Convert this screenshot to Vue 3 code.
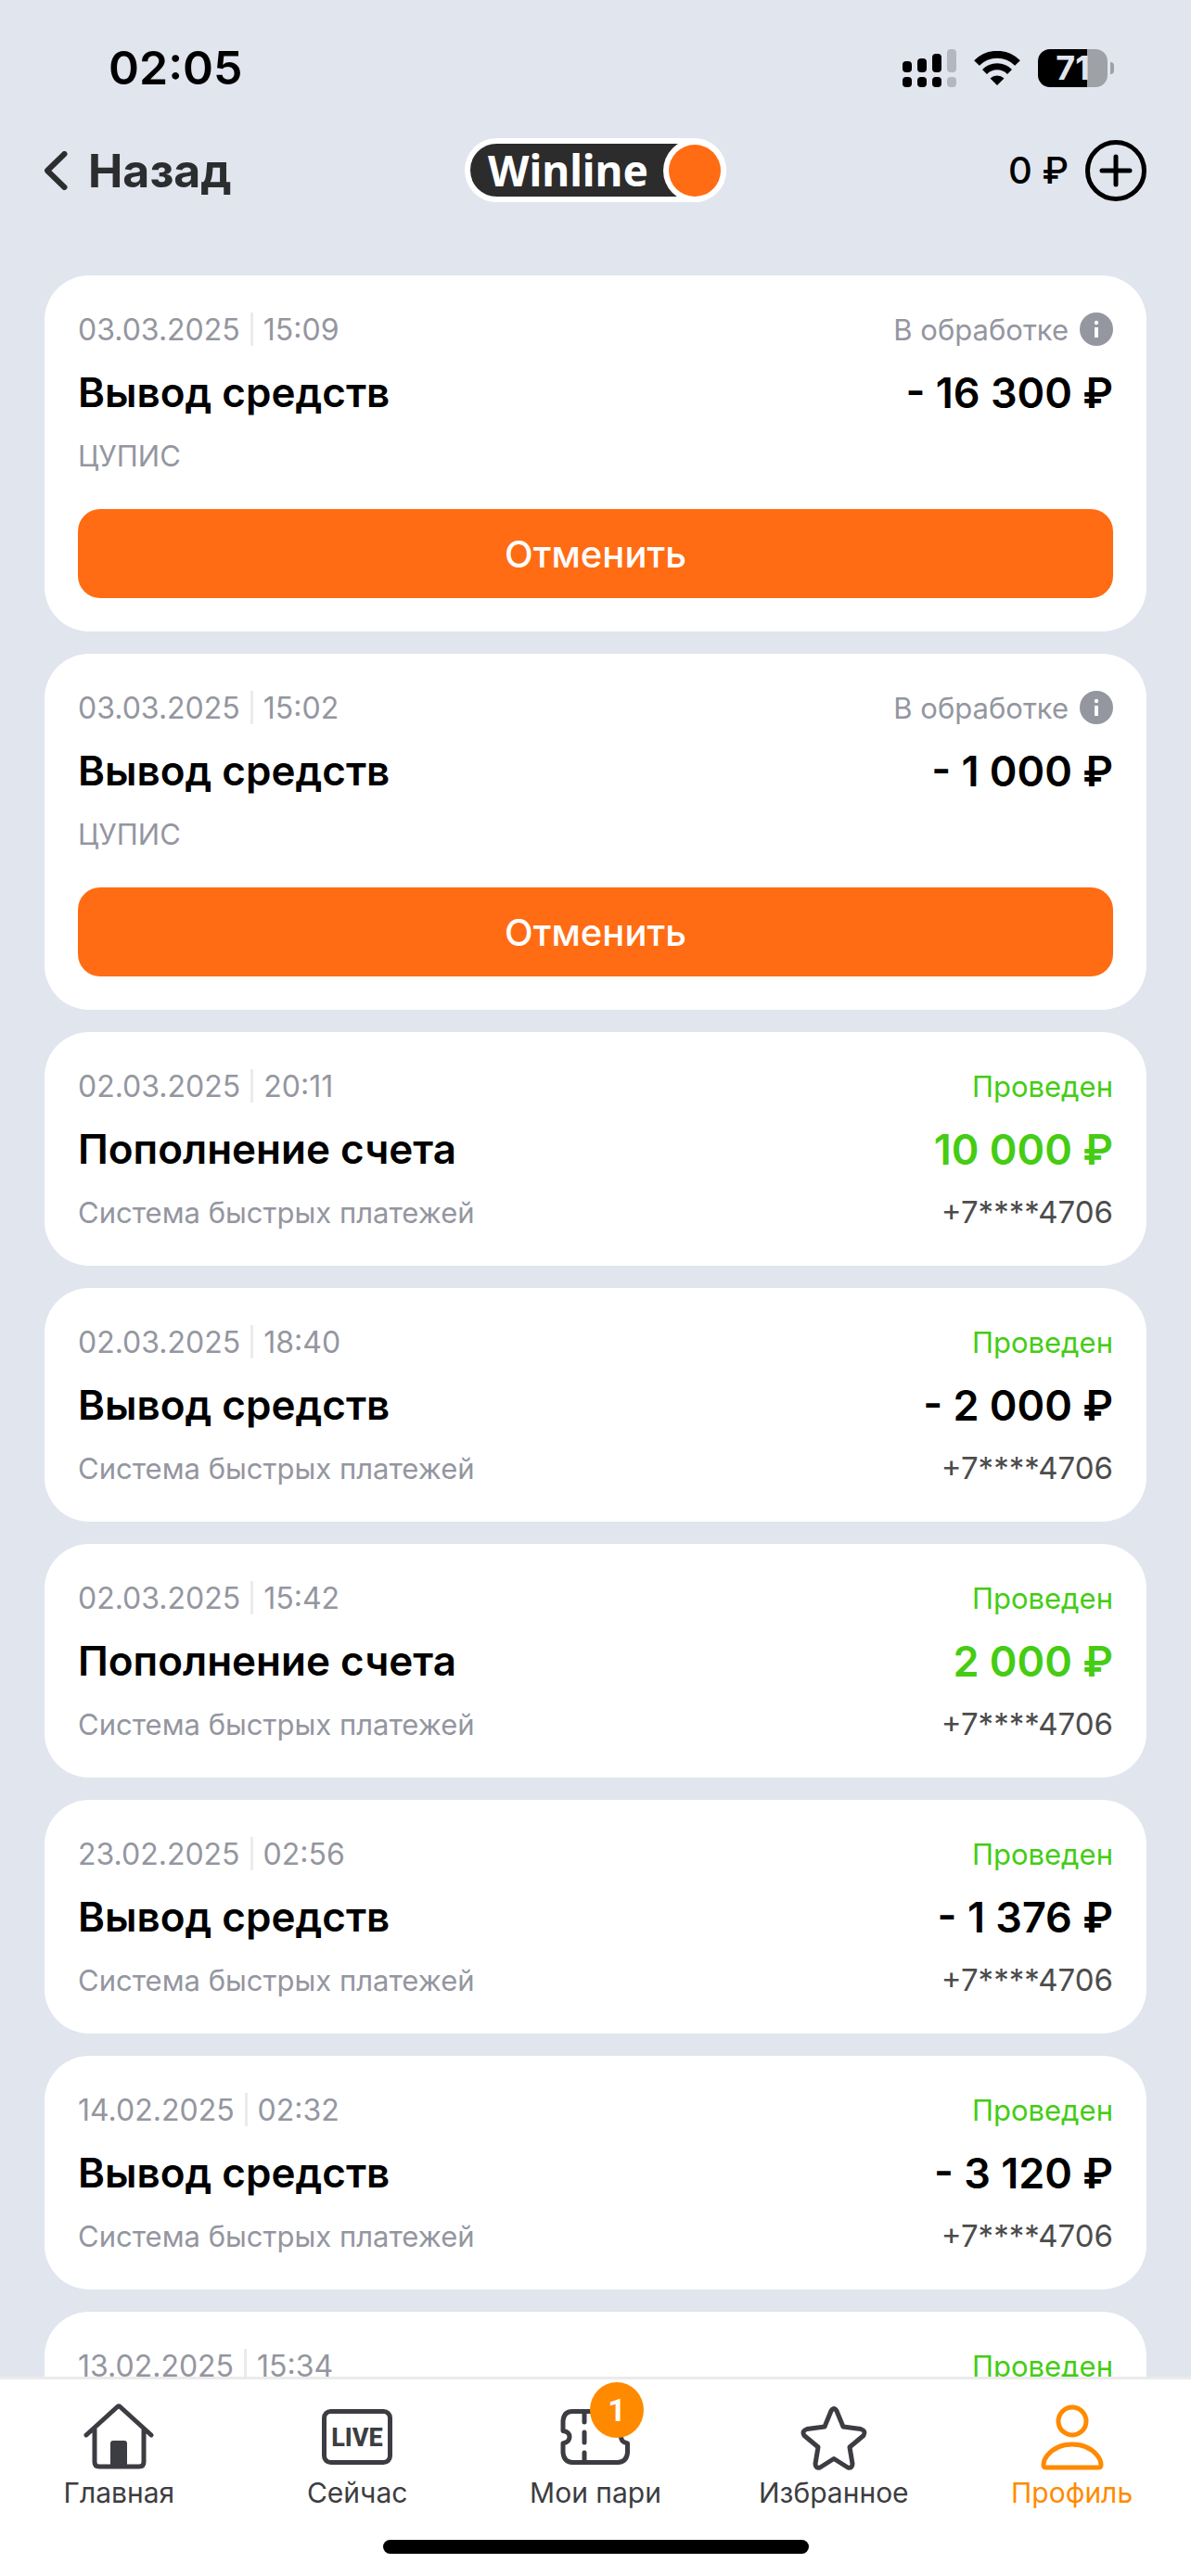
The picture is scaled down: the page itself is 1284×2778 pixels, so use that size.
<script setup>
const operations = [
  { date: '03.03.2025', time: '15:09', title: 'Вывод средств', system: 'ЦУПИС', amount: '- 16 300 ₽', pending: true },
  { date: '03.03.2025', time: '15:02', title: 'Вывод средств', system: 'ЦУПИС', amount: '- 1 000 ₽', pending: true },
  { date: '02.03.2025', time: '20:11', title: 'Пополнение счета', system: 'Система быстрых платежей', amount: '10 000 ₽', income: true, phone: '+7****4706' },
  { date: '02.03.2025', time: '18:40', title: 'Вывод средств', system: 'Система быстрых платежей', amount: '- 2 000 ₽', phone: '+7****4706' },
  { date: '02.03.2025', time: '15:42', title: 'Пополнение счета', system: 'Система быстрых платежей', amount: '2 000 ₽', income: true, phone: '+7****4706' },
  { date: '23.02.2025', time: '02:56', title: 'Вывод средств', system: 'Система быстрых платежей', amount: '- 1 376 ₽', phone: '+7****4706' },
  { date: '14.02.2025', time: '02:32', title: 'Вывод средств', system: 'Система быстрых платежей', amount: '- 3 120 ₽', phone: '+7****4706' },
  { date: '13.02.2025', time: '15:34', title: '', system: '', amount: '', phone: '' },
]
</script>

<template>
  <div class="screen">
    <div class="statusbar">
      <span class="clock">02:05</span>
      <div class="indicators">
        <svg width="58" height="41" viewBox="0 0 58 41" aria-hidden="true">
          <g fill="#000">
            <rect x="0" y="13" width="10" height="12" rx="4" /><rect x="16" y="10" width="10" height="15" rx="4" /><rect x="32" y="5" width="10" height="20" rx="4" />
            <rect x="0" y="30" width="10" height="11" rx="4" /><rect x="16" y="30" width="10" height="11" rx="4" /><rect x="32" y="30" width="10" height="11" rx="4" />
          </g>
          <g fill="#b3b7c0"><rect x="48" y="0" width="10" height="25" rx="4" /><rect x="48" y="30" width="10" height="11" rx="4" /></g>
        </svg>
        <svg width="50" height="37" viewBox="0 0 50 37" aria-hidden="true">
          <path d="M3 13a31 31 0 0 1 44 0" fill="none" stroke="#000" stroke-width="8" />
          <path d="M11.500 22.500a19 19 0 0 1 27 0" fill="none" stroke="#000" stroke-width="7" />
          <path d="M17.500 29.500a11 11 0 0 1 15 0L25 37z" fill="#000" />
        </svg>
        <div class="battery"><span class="cell">71</span><span class="tip"></span></div>
      </div>
    </div>

    <header class="header">
      <button class="back" type="button">
        <svg width="25" height="42" viewBox="0 0 25 42" fill="none" stroke="#2c2d2f" stroke-width="6" stroke-linecap="round" stroke-linejoin="round" aria-hidden="true"><path d="M21.500 3 3 21l18.500 18" /></svg>
        <span>Назад</span>
      </button>
      <a class="logo" href="#"><span class="brand">Winline</span><span class="ball"></span></a>
      <div class="balance">
        <span>0 ₽</span>
        <button class="plus" type="button" aria-label="Пополнить">
          <svg width="66" height="66" viewBox="0 0 66 66" fill="none" stroke="#000" aria-hidden="true"><circle cx="33" cy="33" r="30.500" stroke-width="5" /><path d="M33 18v30M18 33h30" stroke-width="5" stroke-linecap="round" /></svg>
        </button>
      </div>
    </header>

    <main class="list">
      <article v-for="op in operations" :key="op.date + op.time" class="card">
        <div class="row small">
          <span class="when"><span>{{ op.date }}</span><i class="bar"></i><span>{{ op.time }}</span></span>
          <span v-if="op.pending" class="status">В обработке
            <svg width="36" height="36" viewBox="0 0 36 36" aria-hidden="true"><circle cx="18" cy="18" r="18" fill="#9496a0" /><circle cx="18" cy="11" r="2.200" fill="#fff" /><path d="M16 16h4v11h-4z" fill="#fff" /></svg>
          </span>
          <span v-else class="status done">Проведен</span>
        </div>
        <div class="row large">
          <span>{{ op.title }}</span>
          <span class="amount" :class="{ income: op.income }">{{ op.amount }}</span>
        </div>
        <div class="row small">
          <span class="system">{{ op.system }}</span>
          <span class="phone">{{ op.phone }}</span>
        </div>
        <button v-if="op.pending" class="cancel" type="button">Отменить</button>
      </article>
    </main>

    <nav class="tabs">
      <div class="tablist">
        <a class="tab" href="#">
          <svg width="76" height="76" viewBox="0 0 76 76" fill="none" stroke="#3c3d42" stroke-width="5" stroke-linecap="round" stroke-linejoin="round" aria-hidden="true">
            <path d="M3 36 36 6q2-2 4 0l33 30M12 30v35q0 5 5 5h43q5 0 5-5V30" /><path d="M29 70V45q0-3 3-3h12q3 0 3 3v25z" fill="#3c3d42" stroke="none" />
          </svg>
          <span>Главная</span>
        </a>
        <a class="tab" href="#">
          <svg width="76" height="76" viewBox="0 0 76 76" aria-hidden="true">
            <rect x="2.500" y="10.500" width="71" height="55" rx="7" fill="none" stroke="#3c3d42" stroke-width="5" />
            <text x="38" y="48" text-anchor="middle" class="live">LIVE</text>
          </svg>
          <span>Сейчас</span>
        </a>
        <a class="tab" href="#">
          <span class="ticket">
            <svg width="76" height="76" viewBox="0 0 76 76" fill="none" stroke="#3c3d42" stroke-width="5" stroke-linecap="round" stroke-linejoin="round" aria-hidden="true">
              <path d="M13 10.500h49q10 0 10.500 10v11q-7 1-7 6.500t7 7v10q-1 10-10.500 10.500H13q-9-.5-10-10.500V45q7-1.500 7-7t-7-6.500V20.500q1-10 10-10z" /><path d="M26 12v10M26 33v11M26 55v9" />
            </svg>
            <span class="badge">1</span>
          </span>
          <span>Мои пари</span>
        </a>
        <a class="tab" href="#">
          <svg width="76" height="76" viewBox="0 0 76 76" fill="none" stroke="#3c3d42" stroke-width="5" stroke-linejoin="round" aria-hidden="true">
            <path d="M35 10q3-5 6 0l7 17 19 2.500q6 2 3 7L55 49l3 18q0 5-5 4L38 61.500 23 71q-5 1-5-4l3-18L6 36.500q-3-5 3-7L28 27z" />
          </svg>
          <span>Избранное</span>
        </a>
        <a class="tab active" href="#">
          <svg width="76" height="76" viewBox="0 0 76 76" fill="none" stroke="#ff8a00" stroke-width="5" stroke-linejoin="round" aria-hidden="true">
            <circle cx="38" cy="21" r="15" /><path d="M7 68q0-5 4-10Q21 46 38 46t27 12q4 5 4 10 0 3-3 3H10q-3 0-3-3z" />
          </svg>
          <span>Профиль</span>
        </a>
      </div>
      <div class="home-indicator"></div>
    </nav>
  </div>
</template>

<style>
body { margin: 0; background: #e1e5ee; }
</style>

<style scoped>
.screen { height: 100vh; display: flex; flex-direction: column; background: #e1e5ee; color: #000; font-family: Inter, "Liberation Sans", sans-serif; }
button { border: 0; padding: 0; background: none; font: inherit; color: inherit; }
a { color: inherit; text-decoration: none; }
svg { display: block; flex: none; }

.statusbar { display: flex; justify-content: space-between; align-items: center; padding: 42px 83px 0 117px; height: 62px; }
.clock { font-size: 50px; font-weight: 600; line-height: 62px; }
.indicators { display: flex; align-items: center; gap: 19px; }
.battery { display: flex; align-items: center; gap: 3px; }
.cell { width: 75px; height: 41px; border-radius: 13px; background: linear-gradient(90deg, #000 53px, #9ea1a6 53px); color: #e1e5ee; font-size: 36px; font-weight: 700; line-height: 41px; text-align: center; }
.tip { width: 4px; height: 13px; border-radius: 0 8px 8px 0; background: #9ea1a6; }

.header { display: grid; grid-template-columns: 1fr auto 1fr; align-items: center; padding: 45px 48px 79px; }
.back { display: flex; align-items: center; gap: 22px; font-size: 50px; font-weight: 700; line-height: 60px; color: #2c2d2f; }
.logo { display: flex; align-items: center; box-sizing: border-box; width: 282px; height: 69px; border: 6px solid #fff; border-radius: 36px; background: #2c2c2c; justify-content: space-between; }
.brand { padding-left: 19px; font-family: "Noto Sans", sans-serif; font-size: 46px; font-weight: 700; line-height: 57px; color: #fff; }
.ball { width: 56px; height: 56px; border-radius: 50%; background: #ff6c13; box-shadow: 0 0 0 6px #fff; }
.balance { display: flex; justify-content: flex-end; align-items: center; gap: 18px; font-size: 40px; font-weight: 500; }

.list { flex: 1; min-height: 0; overflow: hidden; display: flex; flex-direction: column; gap: 24px; padding: 0 48px; }
.card { flex: none; display: flex; flex-direction: column; gap: 14px; padding: 36px; border-radius: 48px; background: #fff; }
.row { display: flex; justify-content: space-between; align-items: center; }
.small { height: 44px; font-size: 32px; color: #9496a0; }
.large { height: 64px; font-size: 44px; font-weight: 600; }
.amount { font-size: 45px; }
.when { display: flex; align-items: center; gap: 11px; }
.status { display: flex; align-items: center; gap: 12px; }
.status, .system { font-size: 31px; }
.bar { width: 3px; height: 36px; background: #ebebeb; }
.done, .income { color: #45cc14; }
.phone { color: #4c4c4c; font-size: 33px; }
.cancel { height: 96px; margin-top: 22px; border-radius: 24px; background: #ff6c13; color: #fff; font-size: 40px; font-weight: 500; }

.tabs { border-top: 3px solid #ebebeb; background: #fff; color: #3c3d42; }
.tablist { display: grid; grid-template-columns: repeat(5, 1fr); padding-top: 24px; }
.tab { display: flex; flex-direction: column; align-items: center; gap: 2px; font-size: 30px; line-height: 40px; }
.active { color: #ff8a00; }
.live { font-family: Roboto, "Liberation Sans", sans-serif; font-size: 27px; font-weight: 800; fill: #3c3d42; }
.ticket { position: relative; }
.badge { position: absolute; right: -14px; top: -21px; width: 58px; height: 60px; border-radius: 50%; background: #ff8a00; color: #fff; font-family: Roboto, sans-serif; font-size: 34px; font-weight: 700; line-height: 60px; text-align: center; }
.home-indicator { width: 459px; height: 15px; margin: 31px auto 24px; border-radius: 8px; background: #000; }
</style>
